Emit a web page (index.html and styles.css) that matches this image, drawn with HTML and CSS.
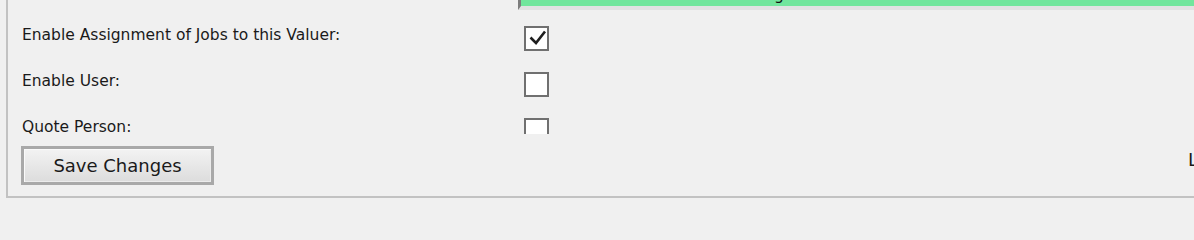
FILE: index.html
```html
<!DOCTYPE html>
<html>
<head>
<meta charset="utf-8">
<link rel="stylesheet" href="styles.css">
</head>
<body>
<div class="panel">
  <div class="scroll">
    <div class="strip">
      <div class="status-input"><span class="status-text">g</span></div>
    </div>
    <div class="row">
      <span class="label">Enable Assignment of Jobs to this Valuer:</span>
      <span class="check checked">
        <svg width="21" height="21" viewBox="0 0 21 21"><polyline points="4.5,9.5 10,15 19,3.5" fill="none" stroke="#1e1e1e" stroke-width="2.6"/></svg>
      </span>
    </div>
    <div class="row">
      <span class="label">Enable User:</span>
      <span class="check"></span>
    </div>
    <div class="row">
      <span class="label">Quote Person:</span>
      <span class="check"></span>
    </div>
  </div>
  <div class="footer">
    <button class="save">Save Changes</button>
    <span class="last">Last Updated</span>
  </div>
</div>
</body>
</html>
```
FILE: styles.css
```css
html, body {
  margin: 0;
  padding: 0;
  background: #f0f0f0;
  overflow: hidden;
  width: 1194px;
  height: 200px;
}
body {
  font-family: "DejaVu Sans", "Noto Sans", sans-serif;
  font-size: 15.5px;
  color: #1a1a1a;
}
.panel {
  margin-left: 6px;
  width: 1400px;
  height: 196px;
  border-left: 2px solid #c2c2c2;
  border-bottom: 2px solid #c2c2c2;
  box-sizing: content-box;
  padding-left: 14px;
}
.scroll {
  height: 134px;
  overflow: hidden;
}
.strip {
  height: 10px;
  overflow: hidden;
  display: flex;
  align-items: flex-end;
  padding-left: 496px;
}
.status-input {
  flex: 1;
  height: 40px;
  background: #72e69d;
  border-left: 3px solid #7d7d7d;
  border-bottom: 4px solid #e2e2e2;
  display: flex;
  align-items: flex-end;
  line-height: 18px;
  padding-bottom: 2px;
  box-sizing: border-box;
}
.status-text {
  margin-left: 253px;
  color: #111;
}
.row {
  height: 46px;
  display: grid;
  grid-template-columns: 502px 25px;
  align-items: start;
  padding-top: 16px;
  box-sizing: border-box;
}
.label {
  line-height: 17px;
  padding-top: 1px;
  white-space: nowrap;
}
.check {
  width: 25px;
  height: 25px;
  box-sizing: border-box;
  border: 2px solid #707070;
  background: #fff;
  display: flex;
  align-items: center;
  justify-content: center;
}
.footer {
  margin-top: 12px;
  display: grid;
  grid-template-columns: 1166px auto;
  align-items: start;
}
.save {
  margin-left: -1px;
  width: 193px;
  height: 39px;
  box-sizing: border-box;
  border: 3px solid #a9a9a9;
  box-shadow: inset 1px 1px 0 #fafafa, inset -1px -1px 0 #ececec;
  background: linear-gradient(#f3f3f3, #dcdcdc);
  font-family: inherit;
  font-size: 18px;
  color: #1a1a1a;
  padding: 0;
}
.last {
  white-space: nowrap;
  margin-top: 3px;
  font-size: 18px;
  line-height: 21px;
}
```
